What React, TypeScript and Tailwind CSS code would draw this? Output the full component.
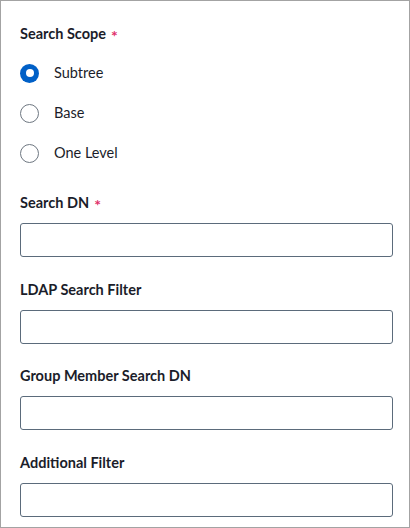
import React from "react";

type FieldProps = {
  label: string;
  required?: boolean;
};

function Label({ label, required }: FieldProps) {
  return (
    <div className="flex items-center h-5 text-[14.5px] font-bold text-[#1b1d2a] leading-5">
      {label}
      {required && (
        <span className="ml-[5px] translate-y-[2px] text-[#e0306a] text-[16px] font-bold leading-5">*</span>
      )}
    </div>
  );
}

function TextField({ label, required }: FieldProps) {
  return (
    <div className="flex flex-col">
      <Label label={label} required={required} />
      <input
        type="text"
        className="mt-[10px] h-[34px] w-full rounded-[3px] border border-[#5b6b7b] bg-white px-2 text-[14px] outline-none"
      />
    </div>
  );
}

const scopes = ["Subtree", "Base", "One Level"];

export default function App() {
  const [scope, setScope] = React.useState("Subtree");

  return (
    <div
      className="w-[410px] h-[528px] border border-[#a3a3a3] bg-white pl-[19px] pr-4 pt-[23px] text-[#1b1d2a]"
      style={{ fontFamily: "Lato, 'Noto Sans', sans-serif" }}
    >
      {/* Search scope */}
      <Label label="Search Scope" required />
      <div className="mt-[9px] flex flex-col">
        {scopes.map((s) => (
          <label key={s} className="flex h-10 items-center cursor-pointer" onClick={() => setScope(s)}>
            {scope === s ? (
              <span className="flex h-[19px] w-[19px] items-center justify-center rounded-full bg-[#0060c7]">
                <span className="h-[8px] w-[8px] rounded-full bg-white" />
              </span>
            ) : (
              <span className="h-[19px] w-[19px] rounded-full border border-[#6e7781] bg-white" />
            )}
            <span className="ml-[15px] text-[14.5px] text-[#1b1d2a]">{s}</span>
          </label>
        ))}
      </div>

      <div className="mt-[20px] flex flex-col gap-[22.5px]">
        <TextField label="Search DN" required />
        <TextField label="LDAP Search Filter" />
        <TextField label="Group Member Search DN" />
        <TextField label="Additional Filter" />
      </div>
    </div>
  );
}
